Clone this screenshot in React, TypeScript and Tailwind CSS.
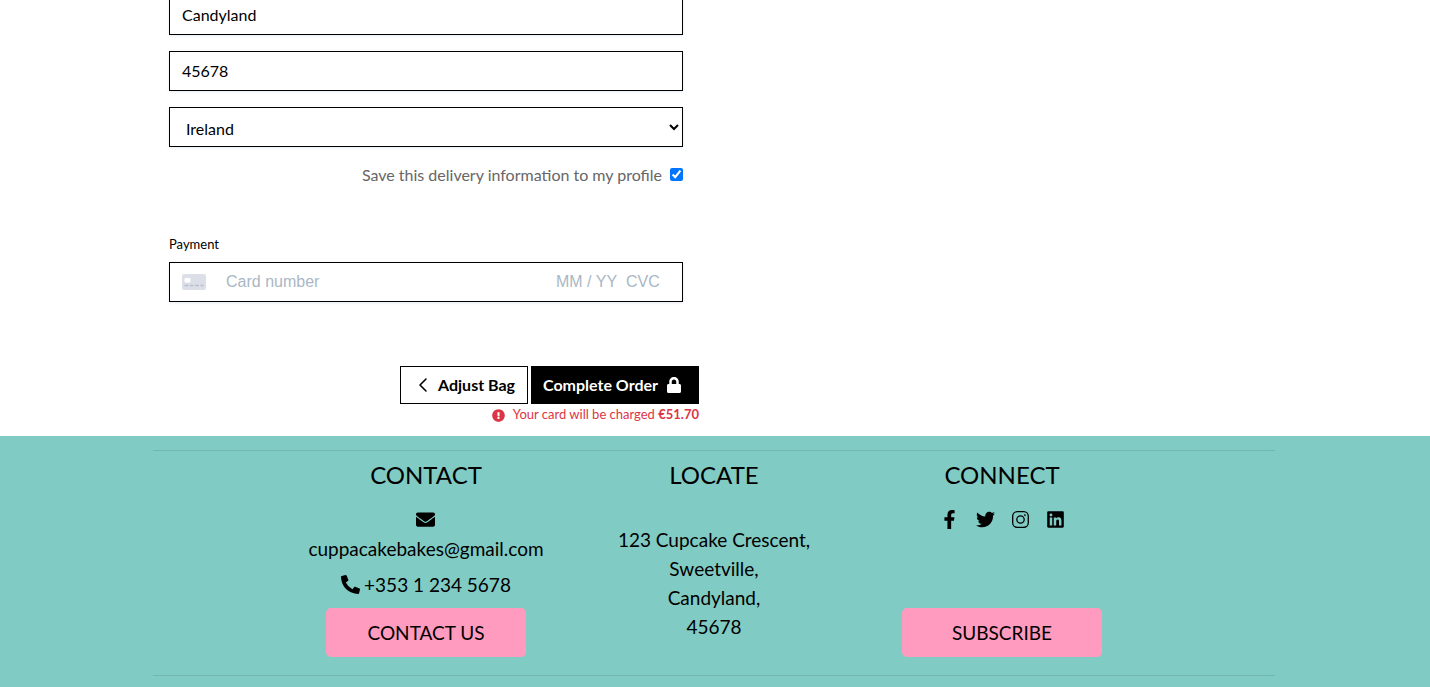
import React from "react";
import {
  FaEnvelope,
  FaExclamationCircle,
  FaFacebookF,
  FaLinkedin,
  FaLock,
  FaPhoneAlt,
  FaTwitter,
} from "react-icons/fa";

const field =
  "block h-10 w-full rounded-none border border-black bg-white px-3 text-base text-black outline-none shadow-[0_1px_3px_0_#e6ebf1]";
const cardField =
  "bg-transparent font-['Liberation_Sans',sans-serif] text-base text-black outline-none placeholder:text-[#aab7c4]";
const pinkButton =
  "flex h-[49px] w-[200px] items-center justify-center rounded-[5px] bg-[#ff9bbe] text-[19px]";
const heading = "pt-[9px] text-2xl leading-[29px]";

function CardIcon() {
  return (
    <svg width="24" height="16" viewBox="0 0 24 16" aria-hidden="true">
      <rect width="24" height="16" rx="2" fill="#dcdfe8" />
      <rect x="2.500" y="4" width="6" height="4.500" rx="1" fill="#fff" />
      <path d="M2.500 11.500h4M8 11.500h3.500M13 11.500h4M18.500 11.500h3" stroke="#b9becd" strokeWidth="1.500" />
    </svg>
  );
}

function InstagramIcon() {
  return (
    <svg width="17" height="17" viewBox="0 0 17 17" fill="none" stroke="currentColor" strokeWidth="1.300" aria-hidden="true">
      <rect x="0.700" y="0.700" width="15.600" height="15.600" rx="4.500" />
      <circle cx="8.500" cy="8.500" r="3.700" />
      <circle cx="12.900" cy="4.100" r="0.900" fill="currentColor" stroke="none" />
    </svg>
  );
}

function CheckoutForm() {
  return (
    <form className="-mt-[5px] w-[calc(50%-15px)]" onSubmit={(e) => e.preventDefault()}>
      <div className="px-4">
        <div className="flex flex-col gap-4">
          <input className={`${field} pb-0.5`} aria-label="County" defaultValue="Candyland" />
          <input className={`${field} pb-0.5`} aria-label="Postal code" defaultValue="45678" />
          <select className={`${field} pt-0.5`} aria-label="Country" defaultValue="IE">
            <option value="IE">Ireland</option>
          </select>
        </div>
        <div className="mt-[15px] flex h-6 items-center justify-end gap-2">
          <label htmlFor="save-info" className="pt-0.5 text-base text-[#666666]">
            Save this delivery information to my profile
          </label>
          <input id="save-info" type="checkbox" defaultChecked className="size-[13px] accent-[#0075ff]" />
        </div>
        <fieldset className="mt-12">
          <legend className="mb-2 text-[13px] leading-5">Payment</legend>
          <div className="flex h-10 items-center border border-black bg-white px-3 shadow-[0_1px_3px_0_#e6ebf1]">
            <CardIcon />
            <input className={`${cardField} ml-5 min-w-0 flex-1`} aria-label="Card number" placeholder="Card number" />
            <input className={`${cardField} w-[70px]`} aria-label="Expiry date" placeholder="MM / YY" />
            <input className={`${cardField} w-11`} aria-label="CVC" placeholder="CVC" />
          </div>
        </fieldset>
      </div>
      <div className="mt-16 flex justify-end gap-[3px]">
        <a href="#bag" className="flex h-[38px] items-center border border-black bg-white px-3 text-base font-bold">
          <svg className="mr-[7px] ml-1" width="14" height="16" viewBox="0 0 14 16" aria-hidden="true">
            <path d="M9 2 3 8l6 6" fill="none" stroke="currentColor" strokeWidth="1.600" strokeLinecap="round" strokeLinejoin="round" />
          </svg>
          Adjust Bag
        </a>
        <button type="submit" className="flex h-[38px] items-center gap-2 bg-black pr-[17px] pl-3 text-base font-bold text-white">
          Complete Order
          <FaLock className="h-4 w-4" />
        </button>
      </div>
      <p className="flex h-[22px] items-center justify-end gap-2 text-[13px] text-[#dc3545]">
        <FaExclamationCircle />
        <span>
          Your card will be charged <strong>€51.70</strong>
        </span>
      </p>
    </form>
  );
}

function Footer() {
  return (
    <footer className="mt-2.5 bg-[#80cbc4] pt-3.5 pr-0.5 pb-4">
      <div className="mx-auto w-full max-w-[1122px]">
        <hr className="border-black/10" />
        <div className="mx-auto grid h-56 max-w-[864px] grid-cols-3 text-center text-[19px] leading-[29px]">
          <section className="flex flex-col items-center">
            <h2 className={heading}>CONTACT</h2>
            <a href="mailto:cuppacakebakes@gmail.com" className="mt-4 flex flex-col items-center">
              <span className="flex h-[29px] items-center">
                <FaEnvelope />
              </span>
              cuppacakebakes@gmail.com
            </a>
            <a href="tel:+35312345678" className="mt-[7px] flex items-center gap-1">
              <FaPhoneAlt />
              +353 1 234 5678
            </a>
            <a href="#contact" className={`${pinkButton} mt-[9px]`}>CONTACT US</a>
          </section>
          <section>
            <h2 className={heading}>LOCATE</h2>
            <address className="mt-9 not-italic">
              123 Cupcake Crescent,
              <br />
              Sweetville,
              <br />
              Candyland,
              <br />
              45678
            </address>
          </section>
          <section className="flex flex-col items-center">
            <h2 className={heading}>CONNECT</h2>
            <div className="mt-4 flex h-[29px] items-center gap-[17px]">
              <a href="#facebook" aria-label="Facebook"><FaFacebookF /></a>
              <a href="#twitter" aria-label="Twitter"><FaTwitter /></a>
              <a href="#instagram" aria-label="Instagram"><InstagramIcon /></a>
              <a href="#linkedin" aria-label="LinkedIn"><FaLinkedin /></a>
            </div>
            <button type="button" className={`${pinkButton} mt-[74px]`}>SUBSCRIBE</button>
          </section>
        </div>
        <hr className="border-black/10" />
      </div>
    </footer>
  );
}

export default function App() {
  return (
    <div className="overflow-hidden bg-white font-[Lato,sans-serif] text-black">
      <main className="pr-0.5">
        <div className="mx-auto max-w-[1122px]">
          <CheckoutForm />
        </div>
      </main>
      <Footer />
    </div>
  );
}
